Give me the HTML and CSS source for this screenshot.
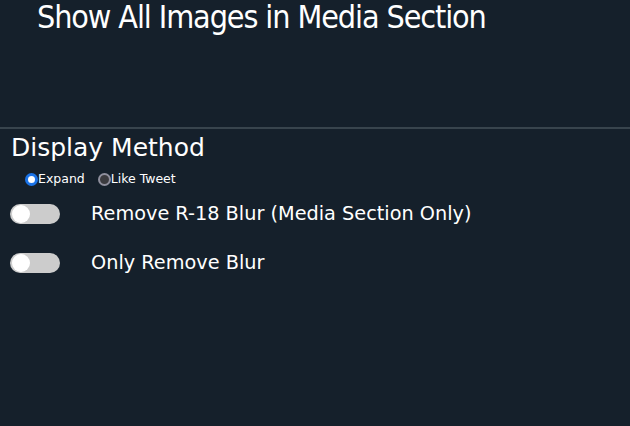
FILE: index.html
```html
<!DOCTYPE html>
<html>
<head>
<meta charset="utf-8">
<link rel="stylesheet" href="styles.css">
</head>
<body>
<header class="header">
  <h1 class="title">Show All Images in Media Section</h1>
</header>
<main class="settings">
  <h2 class="section-title">Display Method</h2>
  <div class="radios">
    <label class="radio"><span class="dot dot-on"></span>Expand</label>
    <label class="radio"><span class="dot"></span>Like Tweet</label>
  </div>
  <div class="toggle-row">
    <span class="toggle"><span class="knob"></span></span>
    <span class="toggle-label">Remove R-18 Blur (Media Section Only)</span>
  </div>
  <div class="toggle-row">
    <span class="toggle"><span class="knob"></span></span>
    <span class="toggle-label">Only Remove Blur</span>
  </div>
</main>
</body>
</html>
```

FILE: styles.css
```css
html, body {
  margin: 0;
  padding: 0;
  background: #15202b;
  color: #ffffff;
  font-family: "DejaVu Sans", Verdana, sans-serif;
  height: 100%;
}
.header {
  height: 127px;
  border-bottom: 2px solid #38444d;
}
.title {
  margin: 0;
  padding-left: 37px;
  font-family: "DejaVu Sans Condensed", "DejaVu Sans", sans-serif;
  font-weight: normal;
  font-size: 32px;
  line-height: 34px;
  letter-spacing: -1.1px;
}
.settings {
  padding: 0 11px;
}
.section-title {
  margin: 0;
  padding-top: 4px;
  font-weight: normal;
  font-size: 25px;
  line-height: 30px;
}
.radios {
  display: flex;
  gap: 13px;
  padding-left: 14px;
  margin-top: 8px;
  font-size: 12.5px;
  line-height: 16px;
}
.radio {
  display: flex;
  align-items: center;
}
.dot {
  width: 9px;
  height: 9px;
  border-radius: 50%;
  border: 2px solid #8f8f9d;
  background: #3b3b3f;
  display: inline-block;
  flex: none;
}
.dot-on {
  border: 3px solid #1a73e8;
  width: 7px;
  height: 7px;
  background: #ffffff;
}
.toggle-row {
  display: flex;
  align-items: center;
  gap: 31px;
  margin-top: 16px;
}
.toggle-row + .toggle-row {
  margin-top: 27px;
}
.toggle {
  width: 50px;
  height: 20px;
  border-radius: 10px;
  background: #cccccc;
  position: relative;
  flex: none;
  margin-left: -1px;
}
.knob {
  position: absolute;
  left: 2px;
  top: 1px;
  width: 18px;
  height: 18px;
  border-radius: 50%;
  background: #ffffff;
}
.toggle-label {
  font-size: 19.3px;
  line-height: 22px;
}
```
